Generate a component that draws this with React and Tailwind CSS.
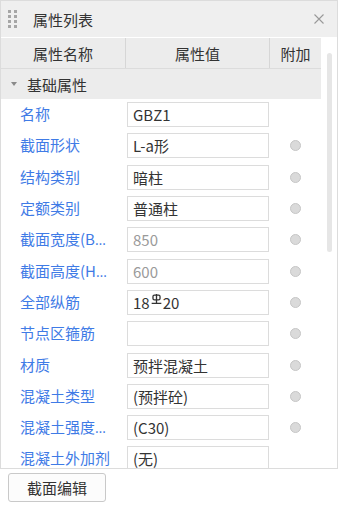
import React from "react";

const rows = [
  { label: "名称", value: "GBZ1", dot: false },
  { label: "截面形状", value: "L-a形", dot: true },
  { label: "结构类别", value: "暗柱", dot: true },
  { label: "定额类别", value: "普通柱", dot: true },
  { label: "截面宽度(B边)(mm)", value: "850", dot: true, muted: true },
  { label: "截面高度(H边)(mm)", value: "600", dot: true, muted: true },
  { label: "全部纵筋", value: "rebar", dot: true },
  { label: "节点区箍筋", value: "", dot: true },
  { label: "材质", value: "预拌混凝土", dot: true },
  { label: "混凝土类型", value: "(预拌砼)", dot: true },
  { label: "混凝土强度等级", value: "(C30)", dot: true },
  { label: "混凝土外加剂", value: "(无)", dot: false },
];

// 三级钢筋符号
function RebarMark() {
  return (
    <svg width="11" height="11" viewBox="0 0 10 10" className="inline-block mx-[1px] -translate-y-[3px]">
      <path d="M1.8 2.3 Q1.8 1 3.1 1 H6.9 Q8.2 1 8.2 2.3 V4 Q8.2 5.3 6.9 5.3 H3.1 Q1.8 5.3 1.8 4 Z" fill="none" stroke="#333" strokeWidth="1.2" />
      <path d="M5 0 V8.6 M0.6 8.6 H9.4" stroke="#333" strokeWidth="1.2" fill="none" />
    </svg>
  );
}

export default function App() {
  return (
    <div className="w-[339px] h-[505px] bg-white text-[15px] text-[#333] font-['Noto_Sans_CJK_SC',sans-serif] leading-none">
      <div className="w-[338px] h-[469px] border border-[#dcdcdc] flex flex-col">
        {/* タイトルバー */}
        <div className="h-[37px] bg-[#efefef] border-b border-white flex items-center shrink-0">
          <div className="grid grid-cols-2 gap-x-[3px] gap-y-[2px] ml-[7px]">
            {Array.from({ length: 8 }).map((_, i) => (
              <span key={i} className="w-[3px] h-[3px] bg-[#a6a6a6]" />
            ))}
          </div>
          <span className="ml-[16px] text-[#333]">属性列表</span>
          <svg width="10" height="10" viewBox="0 0 10 10" className="ml-auto mr-[13px]">
            <path d="M0.5 0.5 L9.5 9.5 M9.5 0.5 L0.5 9.5" stroke="#999" strokeWidth="1.1" />
          </svg>
        </div>

        <div className="flex flex-1 min-h-0">
          <div className="w-[320px] flex flex-col min-h-0">
            {/* ヘッダー */}
            <div className="h-[31px] bg-[#ececec] border-b border-[#dcdcdc] flex shrink-0">
              <div className="w-[125px] border-r border-[#d6d6d6] flex items-center justify-center">属性名称</div>
              <div className="w-[144px] border-r border-[#d6d6d6] flex items-center justify-center">属性值</div>
              <div className="flex-1 flex items-center justify-center">附加</div>
            </div>

            {/* グループ */}
            <div className="h-[30px] bg-[#ececec] flex items-center shrink-0">
              <svg width="6" height="4" viewBox="0 0 6 4" className="ml-[10px]">
                <path d="M0 0 H6 L3 4 Z" fill="#8a8a8a" />
              </svg>
              <span className="ml-[10px]">基础属性</span>
            </div>

            {/* 行 */}
            <div className="flex-1 overflow-hidden">
              {rows.map((r, i) => (
                <div key={i} className="h-[31.3px] flex items-center">
                  <div className="w-[126px] pl-[19px]">
                    <div className="max-w-[96px] truncate text-[#3f7be6] leading-[20px] font-['Open_Sans','Noto_Sans_CJK_SC',sans-serif] text-[14px]">
                      <span className="text-[15px] font-['Noto_Sans_CJK_SC',sans-serif]">{r.label}</span>
                    </div>
                  </div>
                  <div className="w-[142px] h-[25px] border border-[#dcdcdc] flex items-center pl-[5px]">
                    {r.value === "rebar" ? (
                      <span className="flex items-center">
                        18<RebarMark />20
                      </span>
                    ) : (
                      <span className={r.muted ? "text-[#9a9a9a]" : "text-[#333]"}>{r.value}</span>
                    )}
                  </div>
                  {r.dot && (
                    <span className="ml-[21px] w-[11px] h-[11px] rounded-full bg-[#dadada] border border-[#c6c6c6]" />
                  )}
                </div>
              ))}
            </div>
          </div>

          {/* スクロールバー */}
          <div className="flex-1 pt-[15px] pl-[6px]">
            <div className="w-[5px] h-[199px] rounded-full bg-[#e6e6e6]" />
          </div>
        </div>
      </div>

      <button className="mt-[4px] ml-[8px] w-[98px] h-[29px] border border-[#c9c9c9] rounded-[3px] bg-[#fcfcfc] text-[#333] flex items-center justify-center">
        截面编辑
      </button>
    </div>
  );
}
